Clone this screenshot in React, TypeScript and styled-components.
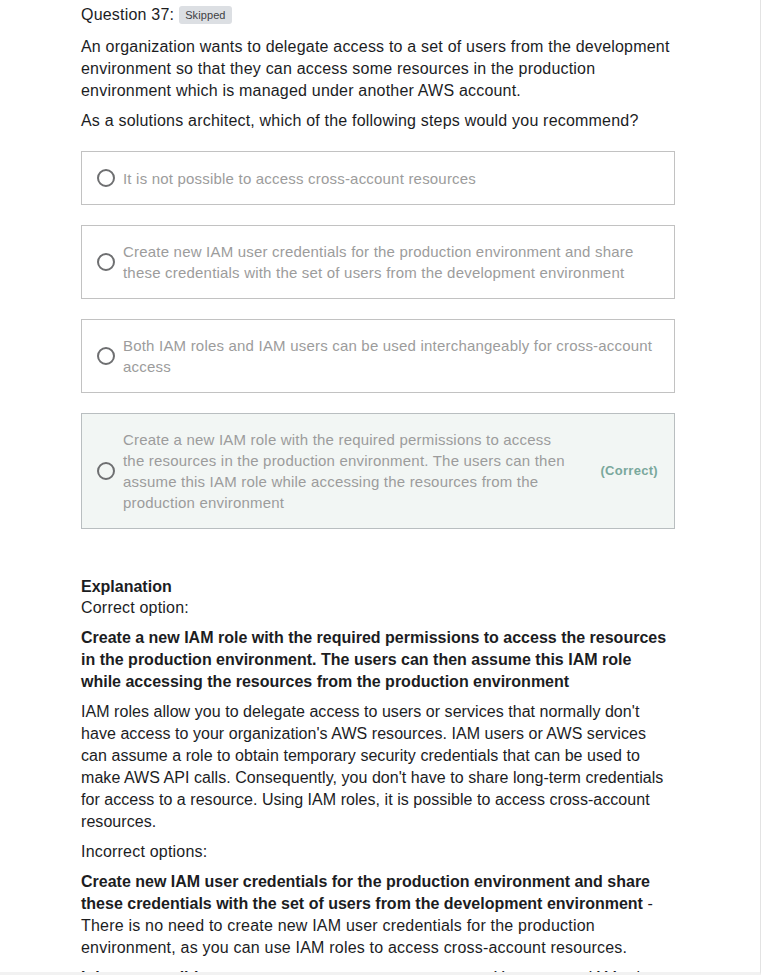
import styled, { createGlobalStyle } from "styled-components";

const GlobalStyle = createGlobalStyle`
  html, body {
    margin: 0;
    padding: 0;
    background: #ffffff;
    height: 975px;
    overflow: hidden;
  }
  * {
    box-sizing: border-box;
  }
`;

const Page = styled.div`
  width: 761px;
  height: 975px;
  border-right: 1px solid #e3e3e3;
  border-bottom: 3px solid #f2f2f2;
  overflow: hidden;
  font-family: "Liberation Sans", Arial, sans-serif;
  color: #1c1d1f;
  font-size: 16px;
  line-height: 22px;
  letter-spacing: 0.2px;
`;

const Content = styled.div`
  width: 594px;
  margin-left: 81px;
  padding-top: 4px;
`;

const Header = styled.div`
  display: flex;
  align-items: center;
  gap: 5px;
  height: 22px;
`;

const Badge = styled.span`
  background: #dcdfe3;
  color: #3e4143;
  font-size: 11px;
  line-height: 18px;
  padding: 0 6px;
  border-radius: 3px;
  letter-spacing: 0.1px;
`;

const Paragraph = styled.p<{ $gap?: number; $tight?: boolean }>`
  margin: ${(p) => p.$gap ?? 8}px 0 0;
  letter-spacing: ${(p) => (p.$tight ? "0.05px" : "inherit")};
`;

const Options = styled.div`
  display: flex;
  flex-direction: column;
  gap: 20px;
  margin-top: 19px;
`;

const Option = styled.div<{ $correct?: boolean }>`
  display: flex;
  align-items: center;
  gap: 8px;
  min-height: 54px;
  padding: 15px 16px 15px 15px;
  border: 1px solid ${(p) => (p.$correct ? "#b9bec0" : "#c2c2c2")};
  background: ${(p) => (p.$correct ? "#f2f6f4" : "#ffffff")};
`;

const Radio = styled.span`
  flex: 0 0 18px;
  width: 18px;
  height: 18px;
  border: 2px solid #6e6f71;
  border-radius: 50%;
`;

const OptionText = styled.span<{ $narrow?: boolean }>`
  flex: ${(p) => (p.$narrow ? "0 0 452px" : "1")};
  font-size: 15px;
  line-height: 21px;
  color: #9c9c9c;
`;

const CorrectTag = styled.span`
  margin-left: auto;
  font-size: 13px;
  font-weight: 700;
  letter-spacing: 0.3px;
  color: #7aa89c;
`;

const Explanation = styled.div`
  margin-top: 48px;
`;

const Title = styled.div`
  font-weight: 700;
  line-height: 20px;
  letter-spacing: 0;
`;

const Strong = styled.strong`
  font-weight: 700;
  letter-spacing: 0;
`;

export default function App() {
  return (
    <>
      <GlobalStyle />
      <Page>
        <Content>
          <Header>
            Question 37: <Badge>Skipped</Badge>
          </Header>
          <Paragraph $gap={10}>
            An organization wants to delegate access to a set of users from the
            development environment so that they can access some resources in
            the production environment which is managed under another AWS
            account.
          </Paragraph>
          <Paragraph>
            As a solutions architect, which of the following steps would you
            recommend?
          </Paragraph>
          <Options>
            <Option>
              <Radio />
              <OptionText>
                It is not possible to access cross-account resources
              </OptionText>
            </Option>
            <Option>
              <Radio />
              <OptionText>
                Create new IAM user credentials for the production environment
                and share these credentials with the set of users from the
                development environment
              </OptionText>
            </Option>
            <Option>
              <Radio />
              <OptionText>
                Both IAM roles and IAM users can be used interchangeably for
                cross-account access
              </OptionText>
            </Option>
            <Option $correct>
              <Radio />
              <OptionText $narrow>
                Create a new IAM role with the required permissions to access
                the resources in the production environment. The users can then
                assume this IAM role while accessing the resources from the
                production environment
              </OptionText>
              <CorrectTag>(Correct)</CorrectTag>
            </Option>
          </Options>
          <Explanation>
            <Title>Explanation</Title>
            <div>Correct option:</div>
            <Paragraph>
              <Strong>
                Create a new IAM role with the required permissions to access
                the resources in the production environment. The users can then
                assume this IAM role while accessing the resources from the
                production environment
              </Strong>
            </Paragraph>
            <Paragraph $tight>
              IAM roles allow you to delegate access to users or services that
              normally don't have access to your organization's AWS resources.
              IAM users or AWS services can assume a role to obtain temporary
              security credentials that can be used to make AWS API calls.
              Consequently, you don't have to share long-term credentials for
              access to a resource. Using IAM roles, it is possible to access
              cross-account resources.
            </Paragraph>
            <Paragraph>Incorrect options:</Paragraph>
            <Paragraph>
              <Strong>
                Create new IAM user credentials for the production environment
                and share these credentials with the set of users from the
                development environment
              </Strong>{" "}
              - There is no need to create new IAM user credentials for the
              production environment, as you can use IAM roles to access
              cross-account resources.
            </Paragraph>
            <Paragraph>
              <Strong>It is not possible to access cross-account resources</Strong>{" "}
              - You can use IAM roles to access cross-account resources.
            </Paragraph>
          </Explanation>
        </Content>
      </Page>
    </>
  );
}
